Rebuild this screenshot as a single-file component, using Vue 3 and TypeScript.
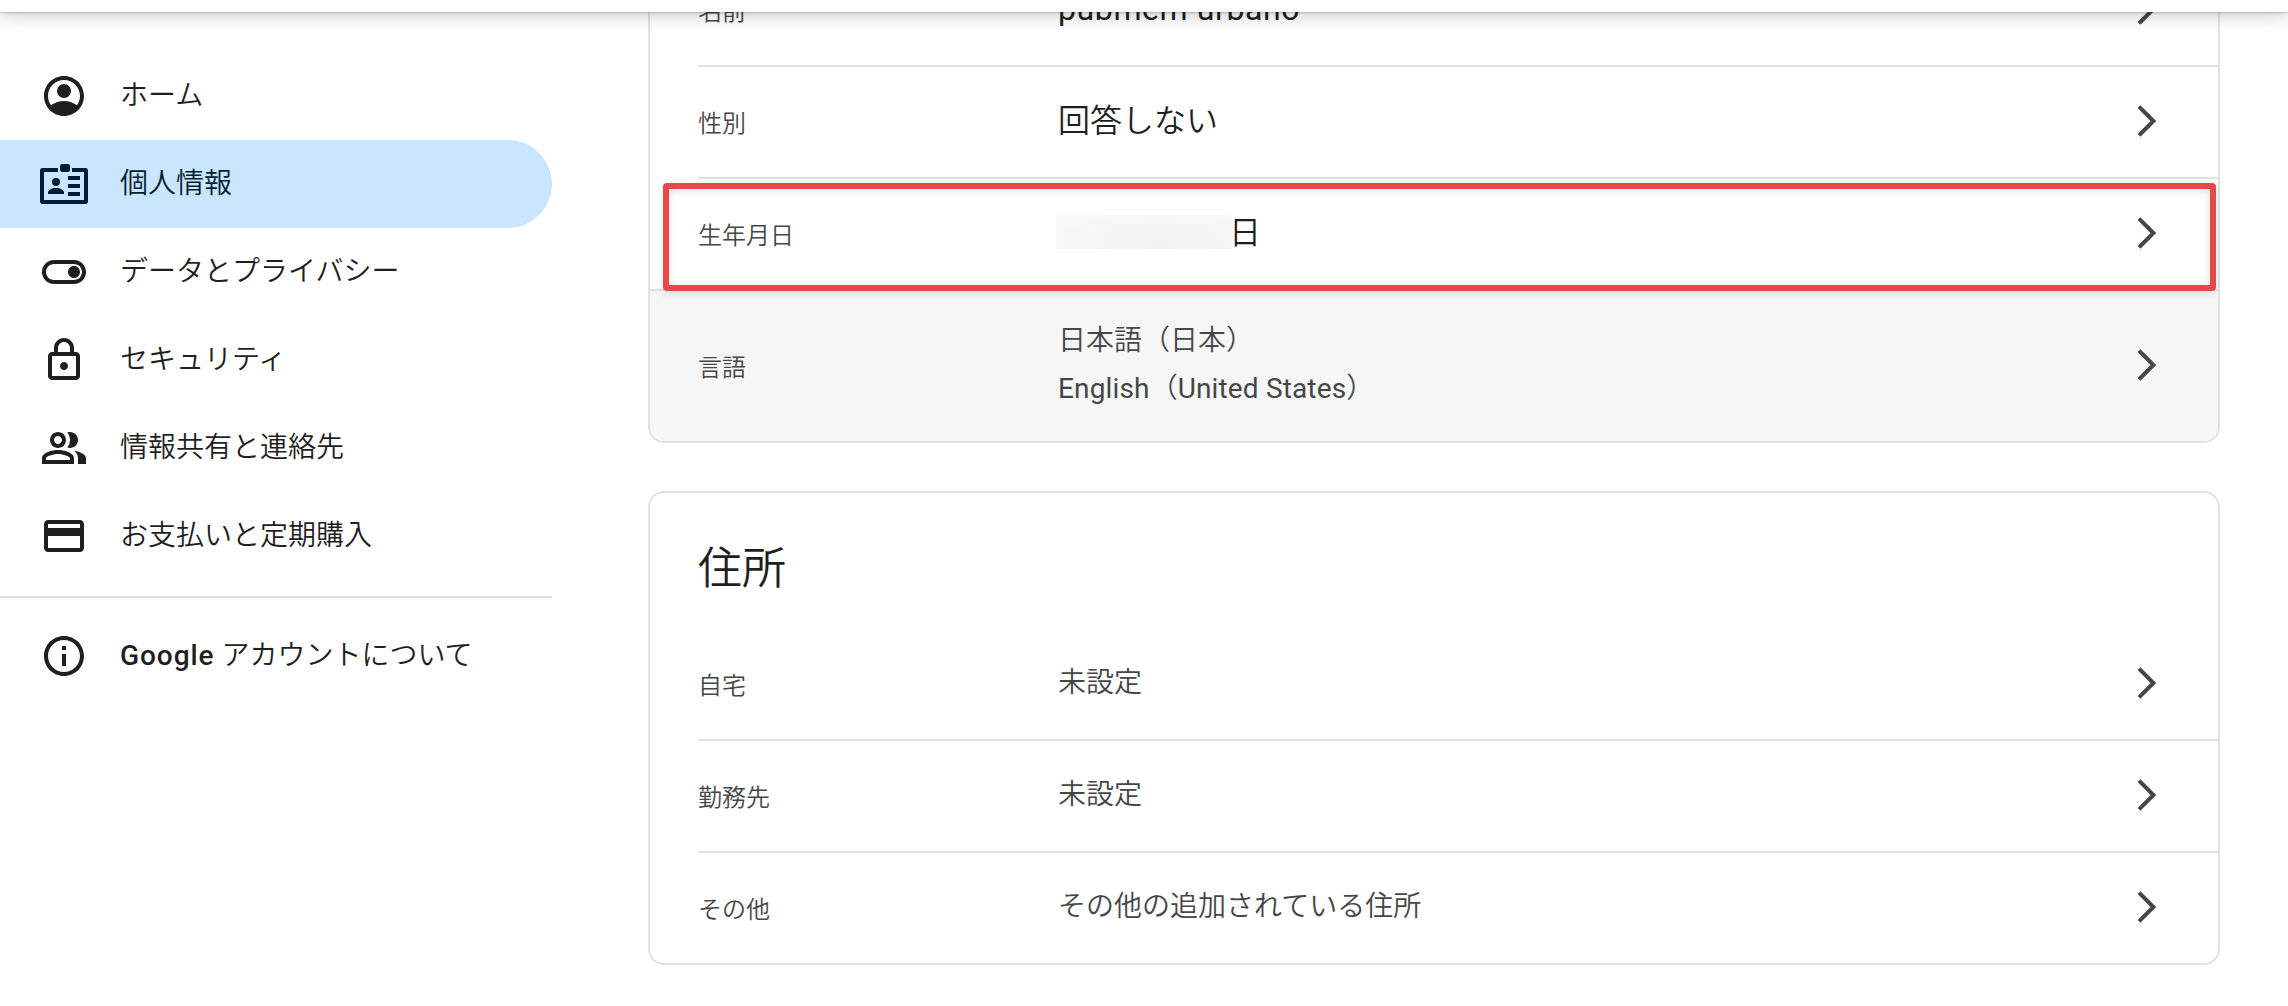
<script setup lang="ts">
interface NavItem {
  label: string
  icon: string
  active?: boolean
}

interface InfoRow {
  label: string
  lines: string[]
  strong?: boolean
  masked?: boolean
  tinted?: boolean
}

const mainNav: NavItem[] = [
  {
    label: 'ホーム',
    icon: 'M12 2C6.48 2 2 6.48 2 12s4.48 10 10 10 10-4.48 10-10S17.52 2 12 2zM12 4c4.41 0 8 3.59 8 8 0 1.74-.56 3.34-1.5 4.65C16.6 15.2 14.2 14.5 12 14.5s-4.6.7-6.5 2.15C4.56 15.34 4 13.74 4 12c0-4.41 3.59-8 8-8zM12 6a3.5 3.5 0 1 0 0 7 3.5 3.5 0 0 0 0-7z',
  },
  {
    label: '個人情報',
    active: true,
    icon: 'M9 4H1.3C.58 4 0 4.58 0 5.3v15.4C0 21.42.58 22 1.3 22h21.4c.72 0 1.3-.58 1.3-1.3V5.3C24 4.58 23.42 4 22.7 4H16v2h6v14H2V6h7zM11 2h3a1 1 0 0 1 1 1v2a1 1 0 0 1-1 1h-3a1 1 0 0 1-1-1V3a1 1 0 0 1 1-1zM14 8h6v2h-6zM14 12h6v2h-6zM14 16h6v2h-6zM8 9a2 2 0 1 0 0 4 2 2 0 0 0 0-4zM4 17v-.75C4 14.9 6 14 8 14s4 .9 4 2.25V17z',
  },
  {
    label: 'データとプライバシー',
    icon: 'M17 6H7c-3.31 0-6 2.69-6 6s2.69 6 6 6h10c3.31 0 6-2.69 6-6s-2.69-6-6-6zm0 10H7c-2.21 0-4-1.79-4-4s1.79-4 4-4h10c2.21 0 4 1.79 4 4s-1.79 4-4 4zm0-7c-1.66 0-3 1.34-3 3s1.34 3 3 3 3-1.34 3-3-1.34-3-3-3z',
  },
  {
    label: 'セキュリティ',
    icon: 'M18 8h-1V6c0-2.76-2.24-5-5-5S7 3.24 7 6v2H6c-1.1 0-2 .9-2 2v10c0 1.1.9 2 2 2h12c1.1 0 2-.9 2-2V10c0-1.1-.9-2-2-2zM9 6c0-1.66 1.34-3 3-3s3 1.34 3 3v2H9V6zm9 14H6V10h12v10zm-6-3c1.1 0 2-.9 2-2s-.9-2-2-2-2 .9-2 2 .9 2 2 2z',
  },
  {
    label: '情報共有と連絡先',
    icon: 'M9 13c-2.7 0-8 1.3-8 4v3h16v-3c0-2.7-5.3-4-8-4zm6 5H3v-.99C3.2 16.29 6.3 15 9 15s5.8 1.29 6 2v1zM9 12c2.21 0 4-1.79 4-4s-1.79-4-4-4-4 1.79-4 4 1.79 4 4 4zm0-6c1.1 0 2 .9 2 2s-.9 2-2 2-2-.9-2-2 .9-2 2-2zM13.7 11.8A5.96 5.96 0 0 0 15 8c0-1.42-.49-2.73-1.3-3.77C14.1 4.09 14.55 4 15 4c2.21 0 4 1.79 4 4s-1.79 4-4 4c-.45 0-.9-.07-1.3-.2zM17 13.35C20 13.9 23 15.1 23 17v3h-4v-3c0-1.47-.79-2.71-2-3.65z',
  },
  {
    label: 'お支払いと定期購入',
    icon: 'M20 4H4c-1.11 0-1.99.89-1.99 2L2 18c0 1.11.89 2 2 2h16c1.11 0 2-.89 2-2V6c0-1.11-.89-2-2-2zm0 14H4v-6h16v6zm0-10H4V6h16v2z',
  },
]

const aboutIcon =
  'M11 7h2v2h-2zM11 11h2v6h-2zM12 2C6.48 2 2 6.48 2 12s4.48 10 10 10 10-4.48 10-10S17.52 2 12 2zm0 18c-4.41 0-8-3.59-8-8s3.59-8 8-8 8 3.59 8 8-3.59 8-8 8z'

const profileRows: InfoRow[] = [
  { label: '名前', lines: ['pubmem urbano'], strong: true },
  { label: '性別', lines: ['回答しない'], strong: true },
  { label: '生年月日', lines: ['日'], strong: true, masked: true },
  { label: '言語', lines: ['日本語（日本）', 'English（United States）'], tinted: true },
]

const addressRows: InfoRow[] = [
  { label: '自宅', lines: ['未設定'] },
  { label: '勤務先', lines: ['未設定'] },
  { label: 'その他', lines: ['その他の追加されている住所'] },
]

// Latin runs are set slightly heavier than the Japanese text around them.
const runs = (line: string) =>
  line
    .split(/([A-Za-z][A-Za-z ]*)/)
    .filter(Boolean)
    .map((text) => ({ text, latin: /^[A-Za-z]/.test(text) }))
</script>

<template>
  <div class="page">
    <header class="topbar"></header>
    <div class="layout">
      <nav class="sidebar">
        <a v-for="item in mainNav" :key="item.label" class="nav-item" :class="{ active: item.active }">
          <svg class="nav-icon" viewBox="0 0 24 24"><path fill-rule="evenodd" :d="item.icon" /></svg>
          <span>{{ item.label }}</span>
        </a>
        <hr class="nav-rule" />
        <a class="nav-item">
          <svg class="nav-icon" viewBox="0 0 24 24"><path :d="aboutIcon" /></svg>
          <span><span class="brand">Google</span> アカウントについて</span>
        </a>
      </nav>

      <main class="content">
        <section class="card profile">
          <div
            v-for="row in profileRows"
            :key="row.label"
            class="row"
            :class="{ tinted: row.tinted, marked: row.masked }"
          >
            <div class="row-body">
              <span class="label">{{ row.label }}</span>
              <div class="value" :class="{ strong: row.strong }">
                <span v-if="row.masked" class="mask"></span>
                <span v-for="line in row.lines" :key="line" class="line"
                  ><span v-for="run in runs(line)" :key="run.text" :class="{ latin: run.latin }">{{
                    run.text
                  }}</span></span
                >
              </div>
              <svg class="chevron" viewBox="0 0 20 32"><path d="M2 1.6 16.4 16 2 30.4" /></svg>
            </div>
          </div>
        </section>

        <section class="card address">
          <h2>住所</h2>
          <div v-for="row in addressRows" :key="row.label" class="row">
            <div class="row-body">
              <span class="label">{{ row.label }}</span>
              <div class="value">
                <span v-for="line in row.lines" :key="line" class="line">{{ line }}</span>
              </div>
              <svg class="chevron" viewBox="0 0 20 32"><path d="M2 1.6 16.4 16 2 30.4" /></svg>
            </div>
          </div>
        </section>
      </main>
    </div>
  </div>
</template>

<style>
body {
  background: #fff;
  overflow: hidden;
}
</style>

<style scoped>
.page {
  height: 1006px;
  overflow: hidden;
  display: flex;
  flex-direction: column;
  color: #1f1f1f;
  font-family: Roboto, 'Noto Sans CJK JP', sans-serif;
  font-weight: 350;
}
.topbar {
  flex: none;
  position: relative;
  z-index: 2;
  height: 12px;
  background: #fff;
  box-shadow: 0 0 3px rgba(0, 0, 0, 0.4), 0 3px 18px rgba(0, 0, 0, 0.24);
}
.layout {
  flex: 1;
  min-height: 0;
  display: flex;
  align-items: flex-start;
  gap: 96px;
}
.sidebar {
  width: 552px;
  padding-top: 40px;
}
.nav-item {
  display: flex;
  align-items: center;
  gap: 32px;
  height: 88px;
  padding-left: 40px;
  box-sizing: border-box;
  font-size: 28px;
  line-height: 40px;
  white-space: nowrap;
}
.nav-item.active {
  background: #c9e6fc;
  color: #001d35;
  border-radius: 0 44px 44px 0;
}
.nav-icon {
  width: 48px;
  height: 48px;
  fill: currentColor;
}
.nav-rule {
  height: 2px;
  margin: 16px 0 14px;
  border: 0;
  background: #e1e3e1;
}
.brand {
  font-weight: 500;
  letter-spacing: 0.95px;
}
.content {
  width: 1572px;
}
.card {
  border: 2px solid #e1e3e1;
  border-radius: 16px;
  box-sizing: border-box;
}
.profile {
  margin-top: -57px;
  border-top: 0;
  border-top-left-radius: 0;
  border-top-right-radius: 0;
}
.row {
  position: relative;
  padding-left: 48px;
}
.row-body {
  display: flex;
  align-items: center;
  height: 110px;
}
.row + .row .row-body {
  border-top: 2px solid #e1e3e1;
}
.row.tinted {
  background: #f6f6f6;
  border-top: 2px solid #e1e3e1;
  border-radius: 0 0 14px 14px;
}
.row.tinted .row-body {
  height: 150px;
  border-top: 0;
}
.row.marked::after {
  content: '';
  position: absolute;
  z-index: 1;
  left: 13px;
  top: 6px;
  width: 1541px;
  height: 96px;
  border: 6px solid #e8484a;
  border-radius: 4px;
  box-shadow: 0 2px 8px rgba(0, 0, 0, 0.12), inset 0 2px 8px rgba(0, 0, 0, 0.12);
}
.label {
  width: 360px;
  padding-top: 4px;
  box-sizing: border-box;
  color: #444746;
  font-size: 24px;
  line-height: 32px;
}
.value {
  flex: 1;
  display: flex;
  flex-direction: column;
  padding-bottom: 3px;
  color: #444746;
  font-size: 28px;
  line-height: 48px;
}
.value.strong {
  color: #1f1f1f;
  font-size: 32px;
}
.latin {
  font-weight: 400;
  letter-spacing: 0.15px;
}
.strong .latin {
  letter-spacing: 0.6px;
}
.marked .value {
  flex-direction: row;
  align-items: center;
}
.mask {
  width: 176px;
  height: 34px;
  margin: 0 -3px 2px -2px;
  background: radial-gradient(ellipse at 60% 80%, #f2f2f2, #f9f9f9 85%);
}
.chevron {
  width: 20px;
  height: 32px;
  margin: 0 61px 2px 0;
  fill: none;
  stroke: #444746;
  stroke-width: 4;
}
h2 {
  height: 136px;
  margin: 0;
  padding: 46px 0 0 48px;
  box-sizing: border-box;
  font-size: 44px;
  font-weight: 350;
  line-height: 60px;
}
.address {
  margin-top: 48px;
}
</style>
